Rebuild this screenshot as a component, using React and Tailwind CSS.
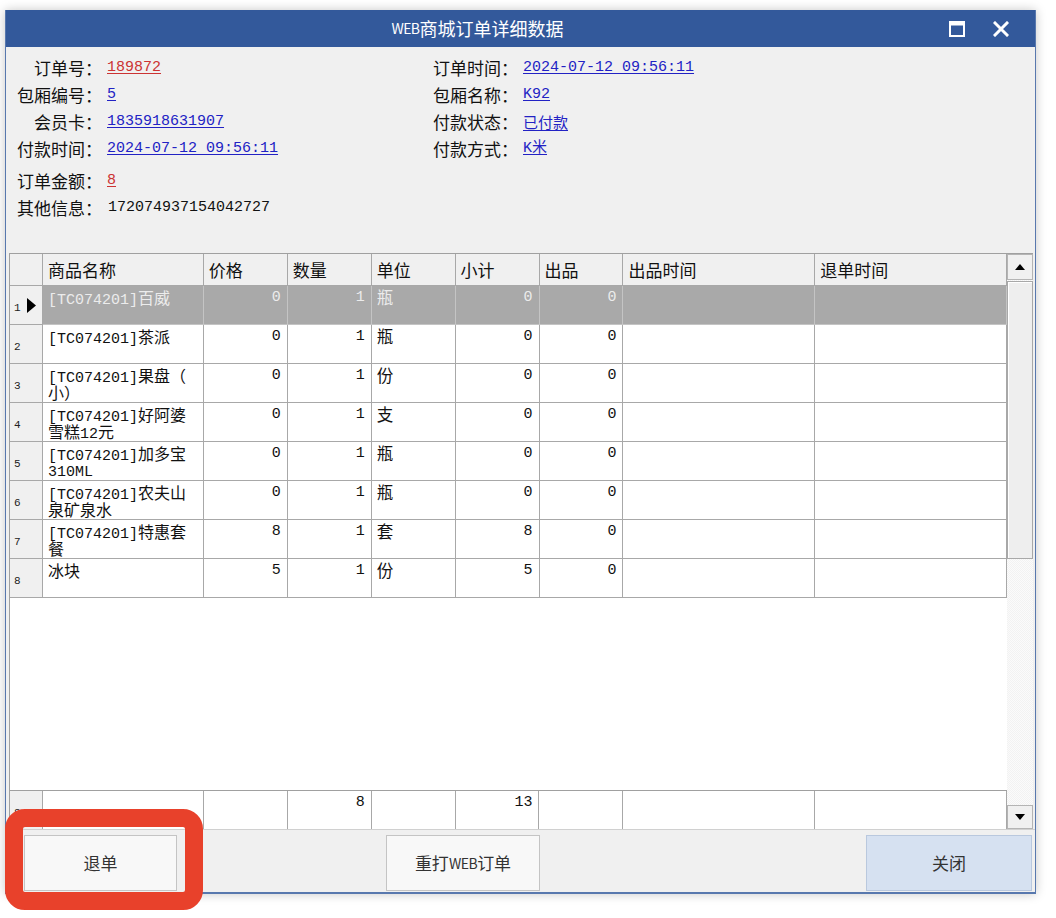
import React from "react";

const CJK = "font-['Noto_Sans_CJK_SC','Noto_Sans_CJK_JP',sans-serif]";
const MONO = "font-['Liberation_Mono','Noto_Sans_CJK_SC',monospace]";

function Mix({ t }) {
  const parts = t.split(/([\x00-\x7F]+)/).filter((p) => p.length);
  return (
    <>
      {parts.map((p, i) =>
        /^[\x00-\x7F]+$/.test(p) ? (
          <span key={i} className={`${MONO} text-[15px] leading-[17px]`}>{p}</span>
        ) : (
          <span key={i} className={`${CJK} text-[16px] leading-[17px]`}>{p}</span>
        )
      )}
    </>
  );
}

const COLS = [
  { key: "name", label: "商品名称", w: "w-[161px]" },
  { key: "price", label: "价格", w: "w-[84px]" },
  { key: "qty", label: "数量", w: "w-[84px]" },
  { key: "unit", label: "单位", w: "w-[84px]" },
  { key: "sub", label: "小计", w: "w-[84px]" },
  { key: "out", label: "出品", w: "w-[84px]" },
  { key: "outt", label: "出品时间", w: "w-[192px]" },
  { key: "rett", label: "退单时间", w: "w-[192px]" },
];

const ROWS = [
  { name: ["[TC074201]百威"], price: "0", qty: "1", unit: "瓶", sub: "0", out: "0" },
  { name: ["[TC074201]茶派"], price: "0", qty: "1", unit: "瓶", sub: "0", out: "0" },
  { name: ["[TC074201]果盘（", "小）"], price: "0", qty: "1", unit: "份", sub: "0", out: "0" },
  { name: ["[TC074201]好阿婆", "雪糕12元"], price: "0", qty: "1", unit: "支", sub: "0", out: "0" },
  { name: ["[TC074201]加多宝", "310ML"], price: "0", qty: "1", unit: "瓶", sub: "0", out: "0" },
  { name: ["[TC074201]农夫山", "泉矿泉水"], price: "0", qty: "1", unit: "瓶", sub: "0", out: "0" },
  { name: ["[TC074201]特惠套", "餐"], price: "8", qty: "1", unit: "套", sub: "8", out: "0" },
  { name: ["冰块"], price: "5", qty: "1", unit: "份", sub: "5", out: "0" },
];

function Info({ label, value, color, underline = true, mono = true }) {
  return (
    <div className="h-[27px] flex items-center">
      <div className={`w-[85px] text-right text-[17px] leading-none text-[#111] ${CJK}`}>{label}</div>
      <div
        className={`ml-[5px] text-[15px] leading-none ${mono ? MONO : CJK} ${underline ? "underline underline-offset-[2px]" : ""} ${color}`}
      >
        {value}
      </div>
    </div>
  );
}

function Btn({ children, w, extra }) {
  return (
    <div
      className={`${w} h-[56px] flex items-center justify-center border ${extra} text-[17px] text-[#333] ${CJK}`}
    >
      {children}
    </div>
  );
}

export default function App() {
  return (
    <div className="w-[1056px] h-[918px] bg-white relative overflow-hidden">
      <div className="pt-[10px] pl-[5px]">
        <div className="w-[1031px] h-[884px] flex flex-col bg-[#f0f0f0] border-x border-b-2 border-[#5878ae] shadow-[0_0_10px_rgba(0,0,0,0.22)]">
          {/* Title bar */}
          <div className="h-[37px] shrink-0 bg-[#33599b] flex items-center">
            <div className="flex-1 flex justify-center items-center text-white pl-[6px]">
              <span className={`${CJK} text-[14px] tracking-[-0.6px]`}>WEB</span>
              <span className={`${CJK} text-[18px]`}>商城订单详细数据</span>
            </div>
            <div className="w-[92px] flex items-center">
              <svg width="16" height="16" viewBox="0 0 16 16" className="ml-[6px]">
                <rect x="1" y="1" width="14" height="14" fill="none" stroke="white" strokeWidth="2" />
                <rect x="1" y="1" width="14" height="3.5" fill="white" />
              </svg>
              <svg width="16" height="16" viewBox="0 0 16 16" className="ml-[28px]">
                <path d="M2 2 L14 14 M14 2 L2 14" stroke="white" strokeWidth="3" strokeLinecap="square" />
              </svg>
            </div>
          </div>

          {/* Info */}
          <div className="h-[206px] shrink-0 pt-[7px] pl-[11px]">
            <div className="flex">
              <div className="w-[416px]">
                <Info label="订单号：" value="189872" color="text-[#cc3333]" />
                <Info label="包厢编号：" value="5" color="text-[#2222c4]" />
                <Info label="会员卡：" value="1835918631907" color="text-[#2222c4]" />
                <Info label="付款时间：" value="2024-07-12 09:56:11" color="text-[#2222c4]" />
              </div>
              <div>
                <Info label="订单时间：" value="2024-07-12 09:56:11" color="text-[#2222c4]" />
                <Info label="包厢名称：" value="K92" color="text-[#2222c4]" />
                <Info label="付款状态：" value="已付款" color="text-[#2222c4]" mono={false} />
                <Info label="付款方式：" value="K米" color="text-[#2222c4]" />
              </div>
            </div>
            <div className="mt-[5px]">
              <Info label="订单金额：" value="8" color="text-[#cc3333]" />
              <div className="h-[27px] flex items-center">
                <div className={`w-[85px] text-right text-[17px] leading-none text-[#111] ${CJK}`}>其他信息：</div>
                <div className={`ml-[6px] text-[15px] leading-none ${MONO} text-[#111]`}>172074937154042727</div>
              </div>
            </div>
          </div>

          {/* Grid */}
          <div className="h-[576px] shrink-0 flex ml-[3px] mr-[1px]">
            <div className="w-[998px] flex flex-col bg-white border-l border-t border-[#a0a0a0]">
              {/* header */}
              <div className="h-[32px] flex shrink-0">
                <div className="w-[33px] h-full bg-[#f0f0f0] border-r border-b border-[#a8a8a8]" />
                {COLS.map((c) => (
                  <div
                    key={c.key}
                    className={`${c.w} h-full bg-[#f0f0f0] border-r border-b border-[#a8a8a8] flex items-center pl-[5px] text-[17px] text-[#111] ${CJK}`}
                  >
                    {c.label}
                  </div>
                ))}
              </div>
              {/* body */}
              <div className="flex-1 bg-white">
                {ROWS.map((r, i) => {
                  const sel = i === 0;
                  const cell = `h-full border-r border-b ${sel ? "bg-[#a9a9a9] border-[#c4c4c4] text-[#ececec]" : "border-[#a8a8a8] text-[#111]"}`;
                  return (
                    <div key={i} className="h-[39px] flex">
                      <div className="w-[33px] h-full bg-[#f0f0f0] border-r border-b border-[#a8a8a8] flex items-center pl-[4px] pt-[6px]">
                        <span className={`text-[11px] text-[#222] ${MONO}`}>{i + 1}</span>
                        {sel && (
                          <svg width="9" height="15" viewBox="0 0 9 15" className="ml-[6px] -mt-[6px]">
                            <path d="M0 0 L9 7.5 L0 15 Z" fill="#000" />
                          </svg>
                        )}
                      </div>
                      <div className={`w-[161px] ${cell} pl-[5px] pt-[3px]`}>
                        {r.name.map((l, j) => (
                          <div key={j} className="h-[17px] leading-[17px] whitespace-nowrap overflow-visible">
                            <Mix t={l} />
                          </div>
                        ))}
                      </div>
                      {["price", "qty"].map((k) => (
                        <div key={k} className={`w-[84px] ${cell} text-right pr-[6px] pt-[3px] leading-[17px] text-[15px] ${MONO}`}>
                          {r[k]}
                        </div>
                      ))}
                      <div className={`w-[84px] ${cell} pl-[5px] pt-[3px] leading-[17px] text-[16.5px] ${CJK}`}>{r.unit}</div>
                      {["sub", "out"].map((k) => (
                        <div key={k} className={`w-[84px] ${cell} text-right pr-[6px] pt-[3px] leading-[17px] text-[15px] ${MONO}`}>
                          {r[k]}
                        </div>
                      ))}
                      <div className={`w-[192px] ${cell}`} />
                      <div className={`w-[192px] ${cell}`} />
                    </div>
                  );
                })}
              </div>
              {/* footer */}
              <div className="h-[39px] flex shrink-0 border-t border-[#a0a0a0]">
                <div className="w-[33px] h-full bg-[#f0f0f0] border-r border-[#a8a8a8] flex items-center pl-[4px] pt-[6px]">
                  <span className={`text-[11px] text-[#222] ${MONO}`}>8</span>
                </div>
                <div className="w-[161px] h-full border-r border-[#a8a8a8]" />
                <div className="w-[84px] h-full border-r border-[#a8a8a8]" />
                <div className={`w-[84px] h-full border-r border-[#a8a8a8] text-right pr-[6px] pt-[3px] leading-[17px] text-[15px] text-[#111] ${MONO}`}>8</div>
                <div className="w-[84px] h-full border-r border-[#a8a8a8]" />
                <div className={`w-[84px] h-full border-r border-[#a8a8a8] text-right pr-[6px] pt-[3px] leading-[17px] text-[15px] text-[#111] ${MONO}`}>13</div>
                <div className="w-[84px] h-full border-r border-[#a8a8a8]" />
                <div className="w-[192px] h-full border-r border-[#a8a8a8]" />
                <div className="w-[192px] h-full border-r border-[#a8a8a8]" />
              </div>
            </div>
            {/* scrollbar */}
            <div className="w-[26px] flex flex-col border-t border-[#a0a0a0] bg-[repeating-conic-gradient(#f2f2f2_0%_25%,#fbfbfb_0%_50%)] bg-[length:2px_2px]">
              <div className="h-[26px] shrink-0 bg-[#f0f0f0] border border-[#b4b4b4] flex items-center justify-center">
                <svg width="10" height="6" viewBox="0 0 10 6"><path d="M0 6 L5 0 L10 6 Z" fill="#000" /></svg>
              </div>
              <div className="h-[278px] shrink-0 mt-[1px] bg-[#eeeeee] border border-[#a8a8a8] shadow-[inset_1px_1px_0_#fff]" />
              <div className="flex-1" />
              <div className="h-[24px] shrink-0 bg-[#f0f0f0] border border-[#b4b4b4] flex items-center justify-center">
                <svg width="10" height="6" viewBox="0 0 10 6"><path d="M0 0 L5 6 L10 0 Z" fill="#000" /></svg>
              </div>
            </div>
          </div>

          {/* buttons */}
          <div className="flex-1 flex items-start pt-[5px] pl-[18px] pr-[3px] border-t border-[#d0d0d0]">
            <Btn w="w-[153px]" extra="bg-[#f8f8f8] border-[#c4c4c4]">退单</Btn>
            <Btn w="w-[154px] ml-[209px]" extra="bg-[#f8f8f8] border-[#c4c4c4]">
              重打<span className="text-[14px] tracking-[-0.5px]">WEB</span>订单
            </Btn>
            <div className="flex-1" />
            <Btn w="w-[166px]" extra="bg-[#d6e1f1] border-[#b9c8de]">关闭</Btn>
          </div>
        </div>
      </div>

      {/* annotation */}
      <div className="absolute left-[5px] top-[809px] w-[198px] h-[101px] border-[18px] border-[#e8412b] rounded-[20px]" />
    </div>
  );
}
